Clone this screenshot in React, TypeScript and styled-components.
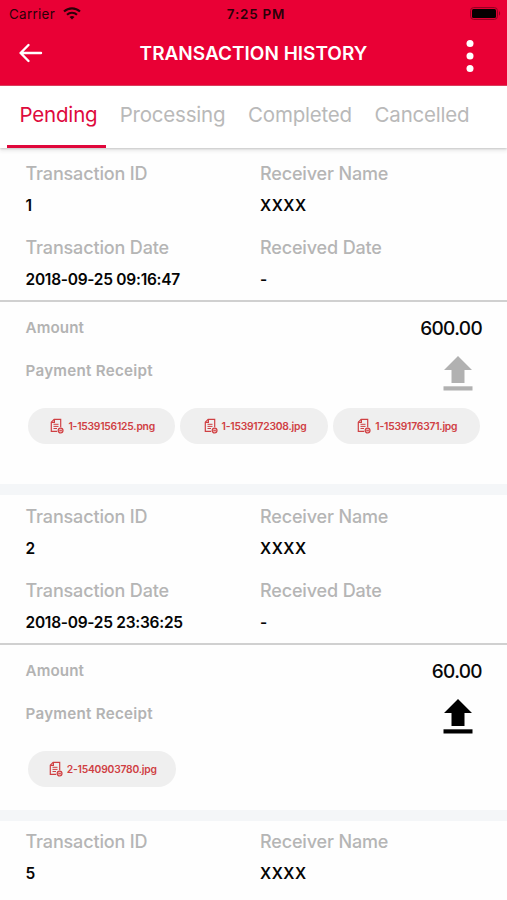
import React from "react";
import styled, { createGlobalStyle } from "styled-components";

const GlobalStyle = createGlobalStyle`
  *, *::before, *::after { box-sizing: border-box; }
  body { margin: 0; background: #fff; }
`;

const Screen = styled.div`
  width: 507px;
  height: 900px;
  overflow: hidden;
  display: flex;
  flex-direction: column;
  background: #fefefe;
  font-family: Inter, "Liberation Sans", sans-serif;
  white-space: nowrap;
`;

const Header = styled.header`
  flex: none;
  height: 86px;
  background: #e90035;
  border-bottom: 1px solid #dc3f5f;
`;

const StatusBar = styled.div`
  display: grid;
  grid-template-columns: 1fr auto 1fr;
  align-items: center;
  height: 27px;
  padding: 0 6px 0 9px;
  color: #2b0008;
  font-size: 13.4px;
`;

const Carrier = styled.span`
  display: flex;
  align-items: center;
  gap: 8px;
  letter-spacing: 0.3px;
`;

const Clock = styled.span`
  padding-left: 2px;
  font-weight: 600;
  font-size: 13.4px;
  letter-spacing: 0.8px;
`;

const BatterySlot = styled.span`
  display: flex;
  justify-content: flex-end;
`;

const TitleBar = styled.div`
  display: grid;
  grid-template-columns: 61px 1fr 46px;
  align-items: center;
  height: 52px;
  padding-left: 18px;
  padding-right: 33px;
`;

const Title = styled.h1`
  margin: 0;
  color: #fff;
  text-align: center;
  font-size: 19px;
  font-weight: 600;
`;

const BackButton = styled.button`
  display: flex;
  padding: 0;
  border: 0;
  background: none;
`;

const MoreButton = styled(BackButton)`
  justify-content: flex-end;
  padding-top: 5px;
`;

const TabBar = styled.nav`
  flex: none;
  display: flex;
  height: 62px;
  padding-left: 7px;
  background: #fff;
  box-shadow: 0 1px 2px rgba(0, 0, 0, 0.18), 0 4px 3px rgba(0, 0, 0, 0.05);
  z-index: 1;
`;

const Tab = styled.button<{ $active?: boolean; $width: number }>`
  width: ${(p) => p.$width}px;
  height: 62px;
  padding: 0 0 2px ${(p) => (p.$active ? 4 : 0)}px;
  border: 0;
  border-bottom: 3px solid ${(p) => (p.$active ? "#e0073b" : "transparent")};
  background: none;
  color: ${(p) => (p.$active ? "#de0a3d" : "#b9b9b9")};
  font-family: inherit;
  font-size: 20.5px;
  letter-spacing: -0.2px;
`;

const Card = styled.article<{ $top: number; $bottom: number }>`
  flex: none;
  padding: ${(p) => p.$top}px 0 ${(p) => p.$bottom}px;
  border-bottom: 11px solid #f4f6f8;
`;

const Details = styled.div`
  display: grid;
  grid-template-columns: 234.5px 1fr;
  row-gap: 22px;
  padding: 0 25px 10px 25.5px;
`;

const Summary = styled.div`
  border-top: 2px solid #d0d0d0;
`;

const Field = styled.div`
  display: flex;
  flex-direction: column;
  gap: 12px;
  line-height: 20px;
`;

const FieldLabel = styled.span`
  color: #b5b5b5;
  font-size: 18px;
  font-weight: 500;
  letter-spacing: -0.15px;
`;

const FieldValue = styled.span<{ $spacing?: number }>`
  color: #050505;
  font-size: 15.5px;
  font-weight: 600;
  letter-spacing: ${(p) => p.$spacing ?? 0}px;
`;

const SummaryRow = styled.div<{ $height: number }>`
  display: flex;
  justify-content: space-between;
  align-items: center;
  height: ${(p) => p.$height}px;
  padding: 0 25px 0 25.5px;
`;

const SummaryLabel = styled.span<{ $spacing?: number }>`
  color: #b3b3b3;
  font-size: 15.2px;
  font-weight: 600;
  letter-spacing: ${(p) => p.$spacing ?? 0}px;
`;

const Amount = styled.span`
  padding-top: 2px;
  color: #080808;
  font-size: 19px;
  font-weight: 500;
  letter-spacing: -0.65px;
`;

const UploadButton = styled.button<{ $enabled?: boolean }>`
  display: flex;
  margin: 5px 9px 0 0;
  padding: 0;
  border: 0;
  background: none;
  color: ${(p) => (p.$enabled ? "#000" : "#b1b1b1")};
`;

const Receipts = styled.div`
  display: flex;
  gap: 5px;
  padding: 21px 27px 0 28px;
`;

const Receipt = styled.a`
  display: flex;
  justify-content: center;
  align-items: center;
  gap: 4px;
  width: 147.5px;
  height: 36px;
  padding-left: 2px;
  border-radius: 18px;
  background: #efefef;
  color: #cf4043;
  font-size: 10.3px;
  font-weight: 600;
  letter-spacing: -0.22px;
`;

function WifiIcon() {
  return (
    <svg width="18" height="13" viewBox="0 0 18 13" fill="none" stroke="#2b0008" strokeWidth="2.1">
      <path d="M1 4.6a11.5 11.5 0 0 1 16 0" />
      <path d="M4 7.8a7.2 7.2 0 0 1 10 0" />
      <path d="M6.5 10.1a3.7 3.7 0 0 1 5 0L9 12.5z" fill="#2b0008" stroke="none" />
    </svg>
  );
}

function BatteryIcon() {
  return (
    <svg width="31" height="13" viewBox="0 0 31 13">
      <rect x="0.6" y="0.6" width="26.8" height="11.8" rx="3" fill="none" stroke="#8d0020" strokeWidth="1" />
      <rect x="2" y="2" width="24" height="9" rx="1.5" fill="#050001" />
      <path d="M29 4.3v4.2c1.5-.5 1.5-3.7 0-4.2z" fill="#8d0020" />
    </svg>
  );
}

function BackIcon() {
  return (
    <svg width="25" height="20" viewBox="0 0 25 20" fill="none" stroke="#fff" strokeWidth="2.4" strokeLinecap="round" strokeLinejoin="round">
      <path d="M23 10H2.6M10.5 2 2.6 10l7.9 8" />
    </svg>
  );
}

function MoreIcon() {
  return (
    <svg width="8" height="34" viewBox="0 0 8 34" fill="#fff">
      <circle cx="4" cy="4.5" r="3.5" />
      <circle cx="4" cy="17" r="3.5" />
      <circle cx="4" cy="29.5" r="3.5" />
    </svg>
  );
}

function UploadIcon() {
  return (
    <svg width="30" height="36" viewBox="0 0 30 36" fill="currentColor">
      <path d="M15 1 29 15h-7.5v13h-13V15H1z" />
      <path d="M.5 31.3h29v4.2H.5z" />
    </svg>
  );
}

function ReceiptIcon() {
  return (
    <svg width="14" height="16" viewBox="0 0 14 16" fill="none" stroke="#cf4043" strokeWidth="1.2">
      <path d="M7.2 13.3H1.3V4.2L4.2 1.3h6.5v8" />
      <path d="M4.4 1.3v3.1H1.3" />
      <path d="M3.5 6.3h5M3.5 8.4h5M3.5 10.5h3.5" strokeWidth="1" />
      <circle cx="10.6" cy="12.6" r="2.4" fill="#efb9ba" />
      <path d="M9.3 12.6h2.6" strokeWidth="0.9" />
    </svg>
  );
}

interface Transaction {
  id: string;
  date?: string;
  amount?: string;
  uploadable?: boolean;
  receipts: string[];
  top: number;
  bottom: number;
}

const transactions: Transaction[] = [
  {
    id: "1",
    date: "2018-09-25 09:16:47",
    amount: "600.00",
    receipts: ["1-1539156125.png", "1-1539172308.jpg", "1-1539176371.jpg"],
    top: 16,
    bottom: 40,
  },
  {
    id: "2",
    date: "2018-09-25 23:36:25",
    amount: "60.00",
    uploadable: true,
    receipts: ["2-1540903780.jpg"],
    top: 12,
    bottom: 23,
  },
  { id: "5", receipts: [], top: 11, bottom: 23 },
];

const tabs = [
  { name: "Pending", width: 99 },
  { name: "Processing", width: 133 },
  { name: "Completed", width: 122 },
  { name: "Cancelled", width: 122 },
];

function DetailField({ label, value, spacing }: { label: string; value: string; spacing?: number }) {
  return (
    <Field>
      <FieldLabel>{label}</FieldLabel>
      <FieldValue $spacing={spacing}>{value}</FieldValue>
    </Field>
  );
}

function TransactionCard({ item }: { item: Transaction }) {
  return (
    <Card $top={item.top} $bottom={item.bottom}>
      <Details>
        <DetailField label="Transaction ID" value={item.id} />
        <DetailField label="Receiver Name" value="XXXX" spacing={0.5} />
        {item.date && (
          <>
            <DetailField label="Transaction Date" value={item.date} spacing={-0.27} />
            <DetailField label="Received Date" value="-" />
          </>
        )}
      </Details>
      {item.amount && (
        <Summary>
          <SummaryRow $height={51}>
            <SummaryLabel $spacing={0.1}>Amount</SummaryLabel>
            <Amount>{item.amount}</Amount>
          </SummaryRow>
          <SummaryRow $height={34}>
            <SummaryLabel $spacing={0.25}>Payment Receipt</SummaryLabel>
            <UploadButton $enabled={item.uploadable} aria-label="Upload receipt">
              <UploadIcon />
            </UploadButton>
          </SummaryRow>
          <Receipts>
            {item.receipts.map((name) => (
              <Receipt key={name}>
                <ReceiptIcon />
                {name}
              </Receipt>
            ))}
          </Receipts>
        </Summary>
      )}
    </Card>
  );
}

export default function App() {
  return (
    <>
      <GlobalStyle />
      <Screen>
        <Header>
          <StatusBar>
            <Carrier>
              Carrier
              <WifiIcon />
            </Carrier>
            <Clock>7:25 PM</Clock>
            <BatterySlot>
              <BatteryIcon />
            </BatterySlot>
          </StatusBar>
          <TitleBar>
            <BackButton aria-label="Back">
              <BackIcon />
            </BackButton>
            <Title>TRANSACTION HISTORY</Title>
            <MoreButton aria-label="More options">
              <MoreIcon />
            </MoreButton>
          </TitleBar>
        </Header>
        <TabBar>
          {tabs.map((tab, i) => (
            <Tab key={tab.name} $active={i === 0} $width={tab.width}>
              {tab.name}
            </Tab>
          ))}
        </TabBar>
        {transactions.map((item) => (
          <TransactionCard key={item.id} item={item} />
        ))}
      </Screen>
    </>
  );
}
